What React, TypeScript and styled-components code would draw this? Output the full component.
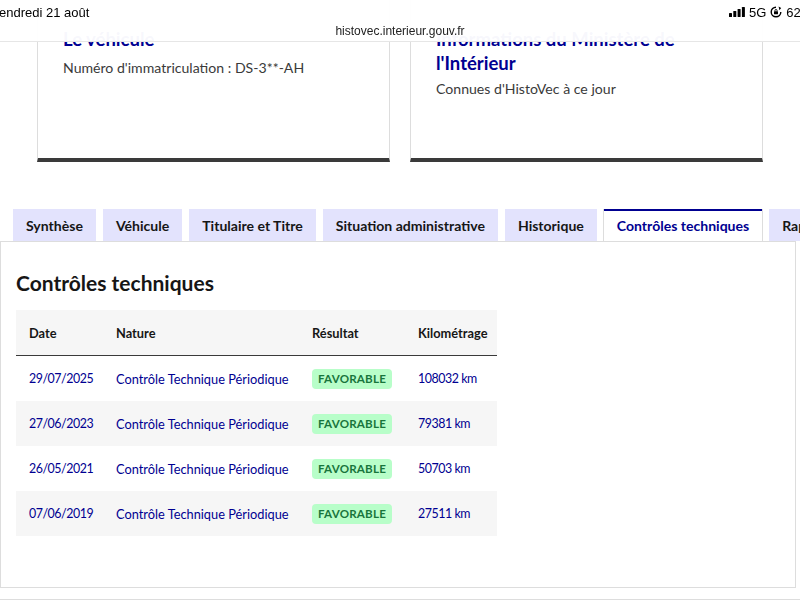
import styled, { createGlobalStyle } from "styled-components";

const GlobalStyle = createGlobalStyle`
  html, body {
    margin: 0;
    padding: 0;
    background: #ffffff;
    overflow: hidden;
  }
  body {
    width: 800px;
    height: 600px;
    font-family: Lato, "Noto Sans", sans-serif;
    color: #161616;
  }
`;

// Safari chrome lying over the scrolled page
const BrowserBar = styled.header`
  position: fixed;
  top: 0;
  left: 0;
  right: 0;
  height: 41px;
  background: rgba(255, 255, 255, 0.97);
  border-bottom: 1px solid #e6e6e6;
  z-index: 10;
  font-family: "Liberation Sans", Arial, sans-serif;
  overflow: hidden;
`;

const StatusRow = styled.div`
  display: flex;
  justify-content: space-between;
  align-items: center;
  height: 24px;
  font-size: 13px;
  color: #000;
`;

const Clock = styled.span`
  margin-left: -9px;
  font-weight: 500;
`;

const Indicators = styled.div`
  display: flex;
  align-items: center;
  gap: 4px;
  margin-right: -16px;
`;

const UrlRow = styled.div`
  text-align: center;
  font-size: 12px;
  color: #222;
  line-height: 14px;
`;

const Page = styled.main`
  display: flex;
  flex-direction: column;
`;

const CardGrid = styled.section`
  display: grid;
  grid-template-columns: 353px 353px;
  column-gap: 20px;
  padding-left: 37px;
`;

const Card = styled.article`
  border: 1px solid #dddddd;
  border-bottom: 4px solid #3a3a3a;
  border-top: none;
  padding: 27px 25px 0;
  box-sizing: border-box;
  height: 162px;
`;

const CardTitle = styled.h3`
  margin: 0;
  font-size: 18.5px;
  line-height: 24px;
  font-weight: 700;
  color: #000091;
`;

const CardText = styled.p<{ $gap: number }>`
  margin: ${(p) => p.$gap}px 0 0;
  font-size: 14.1px;
  line-height: 24px;
  color: #3a3a3a;
`;

const TabsBlock = styled.section`
  margin-top: 47px;
`;

const TabList = styled.nav`
  display: flex;
  gap: 7px;
  padding-left: 13px;
  white-space: nowrap;
  overflow: hidden;
`;

const Tab = styled.button<{ $active?: boolean }>`
  flex: none;
  padding: 0 13px;
  border: none;
  font-family: inherit;
  font-size: 14.05px;
  font-weight: 700;
  cursor: pointer;
  background: ${(p) => (p.$active ? "#ffffff" : "#e3e3fd")};
  color: ${(p) => (p.$active ? "#000091" : "#161616")};
  box-shadow: ${(p) =>
    p.$active
      ? "inset 0 2px 0 #000091, 1px 0 0 #dddddd, -1px 0 0 #dddddd"
      : "none"};
  position: relative;
  z-index: ${(p) => (p.$active ? 1 : 0)};
  margin-bottom: ${(p) => (p.$active ? "-1px" : "0")};
  height: ${(p) => (p.$active ? "33px" : "32px")};
`;

const Panel = styled.div`
  width: 796px;
  border: 1px solid #dddddd;
  padding: 27px 15px 51px;
  height: 347px;
  box-sizing: border-box;
`;

const PanelTitle = styled.h2`
  margin: 0 0 13px;
  font-size: 21px;
  line-height: 28px;
  font-weight: 700;
  color: #161616;
`;

const Table = styled.table`
  width: 481px;
  table-layout: fixed;
  border-collapse: collapse;
  font-size: 12.8px;
`;

const HeadCell = styled.th<{ $w: number }>`
  width: ${(p) => p.$w}px;
  height: 45px;
  padding: 0 13px;
  text-align: left;
  font-weight: 700;
  background: #f6f6f6;
  border-bottom: 1px solid #3a3a3a;
  color: #161616;
`;

const Row = styled.tr<{ $odd: boolean }>`
  background: ${(p) => (p.$odd ? "#f6f6f6" : "#ffffff")};
`;

const Cell = styled.td<{ $numeric?: boolean }>`
  height: 45px;
  padding: 0 13px;
  color: #000091;
  white-space: nowrap;
  letter-spacing: ${(p) => (p.$numeric ? "-0.45px" : "0")};
  font-size: ${(p) => (p.$numeric ? "12.4px" : "inherit")};
`;

const Badge = styled.span`
  display: inline-block;
  padding: 0 6px;
  line-height: 20px;
  border-radius: 4px;
  background: #b8fec9;
  color: #18753c;
  font-size: 11.6px;
  font-weight: 700;
  letter-spacing: 0.2px;
  text-transform: uppercase;
`;

const NextBlock = styled.div`
  margin-top: 11px;
  border-top: 1px solid #dddddd;
  height: 20px;
`;

const SignalIcon = () => (
  <svg width="16" height="10" viewBox="0 0 16 10">
    <rect x="0" y="6" width="3" height="4" rx="0.6" fill="#000" />
    <rect x="4.3" y="4" width="3" height="6" rx="0.6" fill="#000" />
    <rect x="8.6" y="2" width="3" height="8" rx="0.6" fill="#000" />
    <rect x="12.9" y="0" width="3" height="10" rx="0.6" fill="#000" />
  </svg>
);

const RotationLockIcon = () => (
  <svg width="12" height="12" viewBox="0 0 12 12">
    <path d="M6 1.2a4.8 4.8 0 1 0 4.8 4.8" fill="none" stroke="#000" strokeWidth="1.4" />
    <path d="M8.6 0.6l2.6 1.4-1.8 2.2z" fill="#000" />
    <rect x="4" y="5.3" width="4" height="3" rx="0.5" fill="#000" />
    <path d="M4.9 5.4V4.6a1.1 1.1 0 0 1 2.2 0v0.8" fill="none" stroke="#000" strokeWidth="0.9" />
  </svg>
);

const tabs = [
  "Synthèse",
  "Véhicule",
  "Titulaire et Titre",
  "Situation administrative",
  "Historique",
  "Contrôles techniques",
  "Rapport",
];

const controles = [
  { date: "29/07/2025", km: "108032 km" },
  { date: "27/06/2023", km: "79381 km" },
  { date: "26/05/2021", km: "50703 km" },
  { date: "07/06/2019", km: "27511 km" },
];

export default function App() {
  return (
    <>
      <GlobalStyle />
      <BrowserBar>
        <StatusRow>
          <Clock>Vendredi 21 août</Clock>
          <Indicators>
            <SignalIcon />
            <span>5G</span>
            <RotationLockIcon />
            <span>62 %</span>
          </Indicators>
        </StatusRow>
        <UrlRow>histovec.interieur.gouv.fr</UrlRow>
      </BrowserBar>

      <Page>
        <CardGrid>
          <Card>
            <CardTitle>Le véhicule</CardTitle>
            <CardText $gap={5}>Numéro d'immatriculation : DS-3**-AH</CardText>
          </Card>
          <Card>
            <CardTitle>
              Informations du Ministère de
              <br />
              l'Intérieur
            </CardTitle>
            <CardText $gap={2}>Connues d'HistoVec à ce jour</CardText>
          </Card>
        </CardGrid>

        <TabsBlock>
          <TabList>
            {tabs.map((t) => (
              <Tab key={t} $active={t === "Contrôles techniques"}>
                {t}
              </Tab>
            ))}
          </TabList>
          <Panel>
            <PanelTitle>Contrôles techniques</PanelTitle>
            <Table>
              <thead>
                <tr>
                  <HeadCell $w={61}>Date</HeadCell>
                  <HeadCell $w={170}>Nature</HeadCell>
                  <HeadCell $w={80}>Résultat</HeadCell>
                  <HeadCell $w={66}>Kilométrage</HeadCell>
                </tr>
              </thead>
              <tbody>
                {controles.map((c, i) => (
                  <Row key={c.date} $odd={i % 2 === 1}>
                    <Cell $numeric>{c.date}</Cell>
                    <Cell>Contrôle Technique Périodique</Cell>
                    <Cell>
                      <Badge>Favorable</Badge>
                    </Cell>
                    <Cell $numeric>{c.km}</Cell>
                  </Row>
                ))}
              </tbody>
            </Table>
          </Panel>
        </TabsBlock>
        <NextBlock />
      </Page>
    </>
  );
}
